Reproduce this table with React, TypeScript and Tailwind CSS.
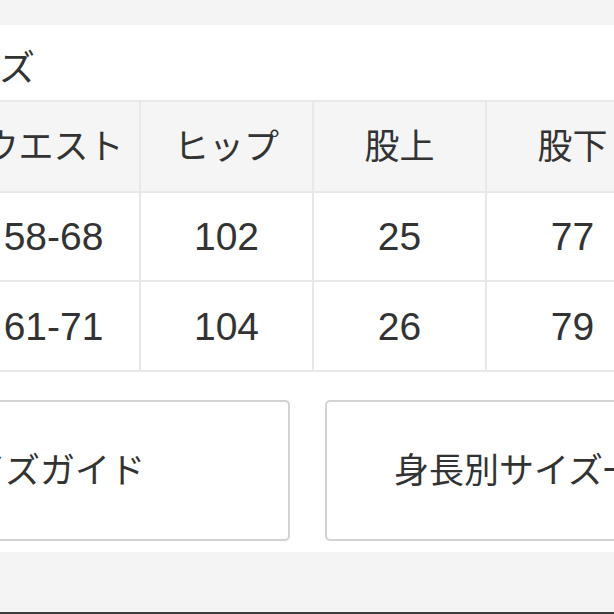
export default function App() {
  const headers = ["ウエスト", "ヒップ", "股上", "股下"];
  const rows = [
    ["58-68", "102", "25", "77"],
    ["61-71", "104", "26", "79"],
  ];
  return (
    <div className="w-[614px] h-[614px] overflow-hidden bg-[#f4f4f4] flex flex-col text-[#333] font-['Liberation_Sans','Noto_Sans_CJK_JP',sans-serif]">
      <div className="h-[25px] shrink-0" />
      <div className="h-[527px] shrink-0 bg-white flex flex-col">
        <div className="h-[75px] shrink-0 pt-[12px] flex items-center -ml-[72px] text-[36px] leading-none whitespace-nowrap">
          サイズ
        </div>
        <div className="-ml-[32px] w-[700px] shrink-0 border-t-2 border-[#e8e8e8] flex flex-col">
          <div className="flex bg-[#f5f5f5]">
            {headers.map((h) => (
              <div
                key={h}
                className="w-[173px] shrink-0 h-[91px] border-r-2 border-b-2 border-[#e8e8e8] flex items-center justify-center text-[35px] leading-none whitespace-nowrap"
              >
                {h}
              </div>
            ))}
          </div>
          {rows.map((r, i) => (
            <div key={i} className="flex bg-white">
              {r.map((c, j) => (
                <div
                  key={j}
                  className={`w-[173px] shrink-0 ${i === 0 ? "h-[89px]" : "h-[90px]"} border-r-2 border-b-2 border-[#e8e8e8] flex items-center justify-center text-[39px] leading-none whitespace-nowrap`}
                >
                  {c}
                </div>
              ))}
            </div>
          ))}
        </div>
        <div className="mt-[28px] flex gap-[35px] -ml-[204px] shrink-0">
          <div className="w-[494px] h-[141px] shrink-0 border-2 border-[#d2d2d2] rounded-[5px] flex items-center justify-end pr-[143px] text-[35px] leading-none whitespace-nowrap">
            サイズガイド
          </div>
          <div className="w-[494px] h-[141px] shrink-0 border-2 border-[#d2d2d2] rounded-[5px] flex items-center justify-start pl-[67px] text-[35px] leading-none whitespace-nowrap">
            身長別サイズ一覧
          </div>
        </div>
      </div>
      <div className="h-[60px] shrink-0" />
      <div className="h-[2px] shrink-0 bg-[#3a3a3a]" />
    </div>
  );
}
